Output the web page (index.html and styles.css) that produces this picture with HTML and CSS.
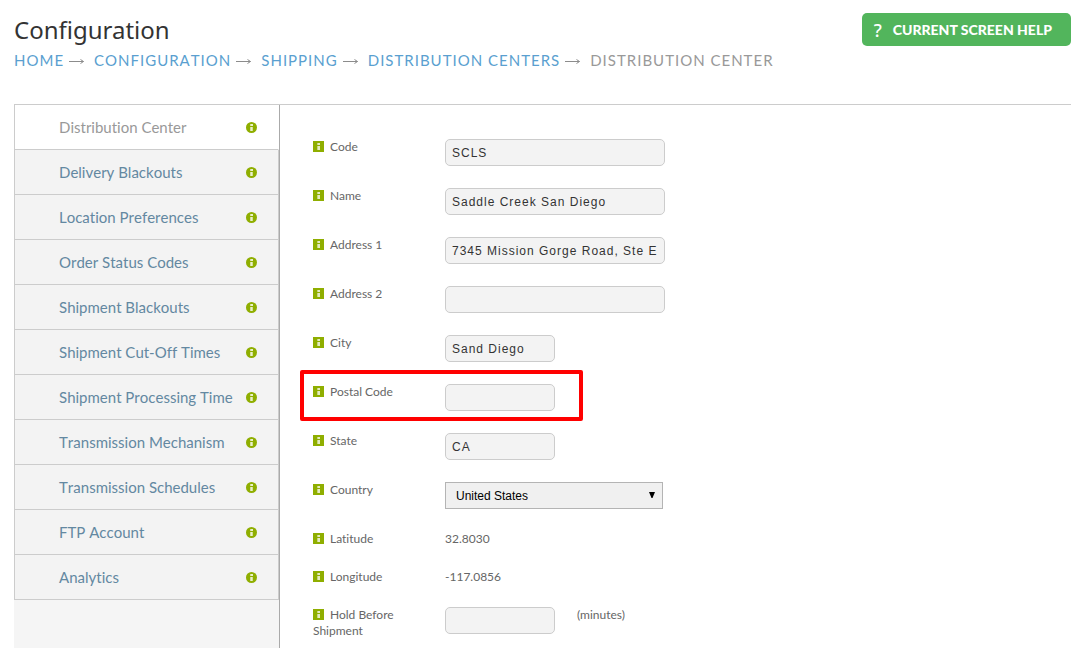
FILE: index.html
```html
<!DOCTYPE html>
<html lang="en">

<head>
    <meta charset="UTF-8">
    <meta name="viewport" content="width=device-width, initial-scale=1.0">
    <title>Configuration - Distribution Center</title>
    <link rel="stylesheet" href="styles.css">
</head>

<body>
    <!-- Shared icons -->
    <svg class="sprite" aria-hidden="true">
        <symbol id="info-round" viewBox="0 0 11 11">
            <circle cx="5.5" cy="5.5" r="5.5" fill="#8fae00" />
            <path d="M4 2h3v2H4zM4 5h3v4H4z" fill="#fff" fill-opacity=".6" />
            <path d="M5 2h2v2H5zM5 5h1v4H5z" fill="#fff" fill-opacity=".5" />
        </symbol>
        <symbol id="info-square" viewBox="0 0 11 11">
            <path d="M0 0h11v11H0z" fill="#8fae00" />
            <path d="M4 2h3v2H4zM4 5h3v4H4z" fill="#fff" fill-opacity=".5" />
            <path d="M5 2h2v2H5zM5 5h2v4H5z" fill="#fff" fill-opacity=".5" />
        </symbol>
        <symbol id="arrow" viewBox="0 0 15 7">
            <path d="M0 3.5h14.5M11.5 1.5l3 2-3 2" fill="none" stroke="#8c8c8c" />
        </symbol>
    </svg>

    <header class="page-header">
        <div class="heading">
            <h1>Configuration</h1>
            <nav class="breadcrumb">
                <a href="#">HOME</a>
                <svg class="arrow"><use href="#arrow" /></svg>
                <a href="#">CONFIGURATION</a>
                <svg class="arrow"><use href="#arrow" /></svg>
                <a href="#">SHIPPING</a>
                <svg class="arrow"><use href="#arrow" /></svg>
                <a href="#">DISTRIBUTION CENTERS</a>
                <svg class="arrow"><use href="#arrow" /></svg>
                <span>DISTRIBUTION CENTER</span>
            </nav>
        </div>
        <button type="button" class="help-button"><span class="mark">?</span>CURRENT SCREEN HELP</button>
    </header>

    <main>
        <!-- Left Side: Tabs -->
        <nav class="sidebar">
            <a class="tab active" href="#">Distribution Center <svg class="info"><use href="#info-round" /></svg></a>
            <a class="tab" href="#">Delivery Blackouts <svg class="info"><use href="#info-round" /></svg></a>
            <a class="tab" href="#">Location Preferences <svg class="info"><use href="#info-round" /></svg></a>
            <a class="tab" href="#">Order Status Codes <svg class="info"><use href="#info-round" /></svg></a>
            <a class="tab" href="#">Shipment Blackouts <svg class="info"><use href="#info-round" /></svg></a>
            <a class="tab" href="#">Shipment Cut-Off Times <svg class="info"><use href="#info-round" /></svg></a>
            <a class="tab" href="#">Shipment Processing Time <svg class="info"><use href="#info-round" /></svg></a>
            <a class="tab" href="#">Transmission Mechanism <svg class="info"><use href="#info-round" /></svg></a>
            <a class="tab" href="#">Transmission Schedules <svg class="info"><use href="#info-round" /></svg></a>
            <a class="tab" href="#">FTP Account <svg class="info"><use href="#info-round" /></svg></a>
            <a class="tab" href="#">Analytics <svg class="info"><use href="#info-round" /></svg></a>
        </nav>

        <!-- Right Side: Form -->
        <form class="details">
            <div class="row">
                <label for="code"><svg class="info"><use href="#info-square" /></svg>Code</label>
                <input type="text" id="code" value="SCLS">
            </div>
            <div class="row">
                <label for="name"><svg class="info"><use href="#info-square" /></svg>Name</label>
                <input type="text" id="name" value="Saddle Creek San Diego">
            </div>
            <div class="row">
                <label for="address1"><svg class="info"><use href="#info-square" /></svg>Address 1</label>
                <input type="text" id="address1" value="7345 Mission Gorge Road, Ste E">
            </div>
            <div class="row">
                <label for="address2"><svg class="info"><use href="#info-square" /></svg>Address 2</label>
                <input type="text" id="address2">
            </div>
            <div class="row">
                <label for="city"><svg class="info"><use href="#info-square" /></svg>City</label>
                <input type="text" id="city" class="short" value="Sand Diego">
            </div>
            <div class="row highlight">
                <label for="postal"><svg class="info"><use href="#info-square" /></svg>Postal Code</label>
                <input type="text" id="postal" class="short">
            </div>
            <div class="row">
                <label for="state"><svg class="info"><use href="#info-square" /></svg>State</label>
                <input type="text" id="state" class="short" value="CA">
            </div>
            <div class="row">
                <label for="country"><svg class="info"><use href="#info-square" /></svg>Country</label>
                <div class="select-box">
                    <select id="country">
                        <option>United States</option>
                    </select>
                    <svg class="caret" viewBox="0 0 6 6"><path d="M0 0h6L3.5 6h-1z" /></svg>
                </div>
            </div>
            <div class="row">
                <span class="label"><svg class="info"><use href="#info-square" /></svg>Latitude</span>
                <span>32.8030</span>
            </div>
            <div class="row">
                <span class="label"><svg class="info"><use href="#info-square" /></svg>Longitude</span>
                <span>-117.0856</span>
            </div>
            <div class="row">
                <label for="hold"><svg class="info"><use href="#info-square" /></svg>Hold Before Shipment</label>
                <input type="text" id="hold" class="short">
                <span class="unit">(minutes)</span>
            </div>
        </form>
    </main>
</body>

</html>
```
FILE: styles.css
```css
* {
    box-sizing: border-box;
}

body {
    display: flex;
    flex-direction: column;
    min-height: 100vh;
    margin: 0;
    padding: 0 12px 0 14px;
    background-color: #fff;
    color: #666;
    font-family: Lato, sans-serif;
    font-size: 12px;
    line-height: 16px;
    font-variant-ligatures: none;
}

a {
    text-decoration: none;
}

.sprite {
    display: none;
}

.info {
    width: 11px;
    height: 11px;
    flex: none;
}

/* Header */
.page-header {
    display: flex;
    justify-content: space-between;
    align-items: flex-start;
    padding: 13px 0 32px;
}

h1 {
    margin: 0 0 2px;
    color: #333;
    font-family: "Noto Sans", sans-serif;
    font-size: 24px;
    font-weight: normal;
    line-height: 33px;
}

.breadcrumb {
    display: flex;
    align-items: center;
    color: #999;
    font-size: 15px;
    line-height: 24px;
    letter-spacing: 1px;
    font-kerning: none;
}

.breadcrumb a {
    color: #5a9fd0;
}

.arrow {
    width: 15px;
    height: 7px;
    margin: 3px 10px 0 5px;
}

.help-button {
    display: flex;
    align-items: center;
    padding: 0 19px 0 12px;
    height: 33px;
    border: none;
    border-radius: 5px;
    background-color: #52b55c;
    color: #fff;
    font-family: Lato, sans-serif;
    font-size: 14px;
    font-weight: 900;
    cursor: pointer;
}

.help-button .mark {
    margin-right: 11px;
    font-family: "Noto Sans", sans-serif;
    font-size: 18px;
    font-weight: 500;
}

main {
    display: flex;
    flex: 1;
    border-top: 1px solid #ccc;
}

/* Sidebar */
.sidebar {
    width: 266px;
    flex: none;
    border-right: 1px solid #aaa;
    background-color: #f5f5f5;
}

.tab {
    display: flex;
    justify-content: space-between;
    align-items: center;
    height: 45px;
    padding: 0 21px 0 44px;
    border: 1px solid #ccc;
    border-top: none;
    background-color: #f3f3f3;
    color: #6388a1;
    font-size: 15px;
    font-kerning: none;
}

.tab.active {
    border-right-color: #fff;
    background-color: #fff;
    color: #999;
}

/* Form */
.details {
    display: flex;
    flex-direction: column;
    gap: 22px;
    padding: 34px 0 8px 33px;
}

.row {
    position: relative;
    display: flex;
    align-items: flex-start;
}

.row label,
.row .label {
    width: 132px;
    padding-right: 20px;
}

.row .info {
    margin-right: 6px;
    vertical-align: -1px;
}

input,
select {
    height: 27px;
    font-family: "Liberation Sans", Arial, sans-serif;
    font-size: 12px;
}

input {
    width: 220px;
    padding: 0 6px;
    border: 1px solid #ccc;
    border-radius: 5px;
    background-color: #f3f3f3;
    color: #333;
    letter-spacing: 1px;
}

input.short {
    width: 110px;
}

.select-box {
    position: relative;
}

select {
    width: 218px;
    padding: 0 10px;
    border: 1px solid #b4b4b4;
    border-radius: 0;
    background-color: #f0f0f0;
    color: #000;
    appearance: none;
}

.caret {
    position: absolute;
    top: 10px;
    right: 8px;
    width: 6px;
    height: 6px;
    pointer-events: none;
}

.unit {
    margin-left: 22px;
}

/* Red frame around the field to fill in */
.highlight::after {
    content: "";
    position: absolute;
    box-sizing: border-box;
    top: -14px;
    left: -13px;
    width: 283px;
    height: 51px;
    border: 4px solid #f00;
    border-radius: 2px;
    pointer-events: none;
}
```
